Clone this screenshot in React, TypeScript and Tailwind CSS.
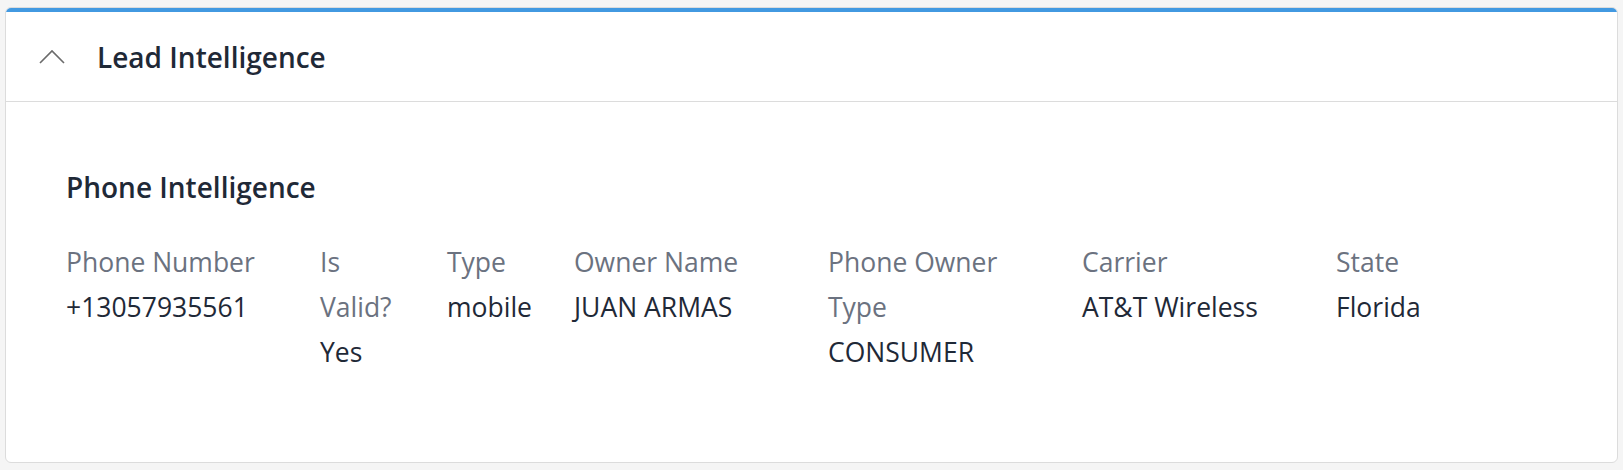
import React from "react";

const fields = [
  { label: "Phone Number", value: "+13057935561", width: "w-[254px]" },
  { label: "Is Valid?", value: "Yes", width: "w-[127px]" },
  { label: "Type", value: "mobile", width: "w-[127px]" },
  { label: "Owner Name", value: "JUAN ARMAS", width: "w-[254px]" },
  { label: "Phone Owner Type", value: "CONSUMER", width: "w-[254px]" },
  { label: "Carrier", value: "AT&T Wireless", width: "w-[254px]" },
  { label: "State", value: "Florida", width: "w-[254px]" },
];

export default function App() {
  return (
    <div
      className="min-h-screen bg-[#f5f5f5] pt-[7px] px-[5px]"
      style={{ fontFamily: '"Open Sans", "Noto Sans", Arial, sans-serif' }}
    >
      <div className="rounded-md border border-[#dcdcdc] bg-white overflow-hidden">
        <div className="h-1 bg-[#4299e1]" />
        <div className="flex items-center h-[90px] border-b border-[#dcdcdc] pl-[33px]">
          <svg width="26" height="16" viewBox="0 0 26 16" fill="none" className="text-[#6b6b6b]">
            <path d="M1 14 L13 2 L25 14" stroke="currentColor" strokeWidth="1.6" />
          </svg>
          <h1 className="ml-[32px] text-[28px] font-semibold text-[#1f2937]">Lead Intelligence</h1>
        </div>
        <div className="pl-[60px] pr-[20px] pt-[65px] pb-[87px]">
          <h2 className="text-[28px] font-semibold text-[#1f2937] leading-[40px]">Phone Intelligence</h2>
          <div className="flex mt-[33px]">
            {fields.map((f) => (
              <div key={f.label} className={`${f.width} shrink-0 pr-[30px] text-[26.5px] leading-[45px]`}>
                <div className="text-[#6b7280]">{f.label}</div>
                <div className="text-[#1f2937]">{f.value}</div>
              </div>
            ))}
          </div>
        </div>
      </div>
    </div>
  );
}
